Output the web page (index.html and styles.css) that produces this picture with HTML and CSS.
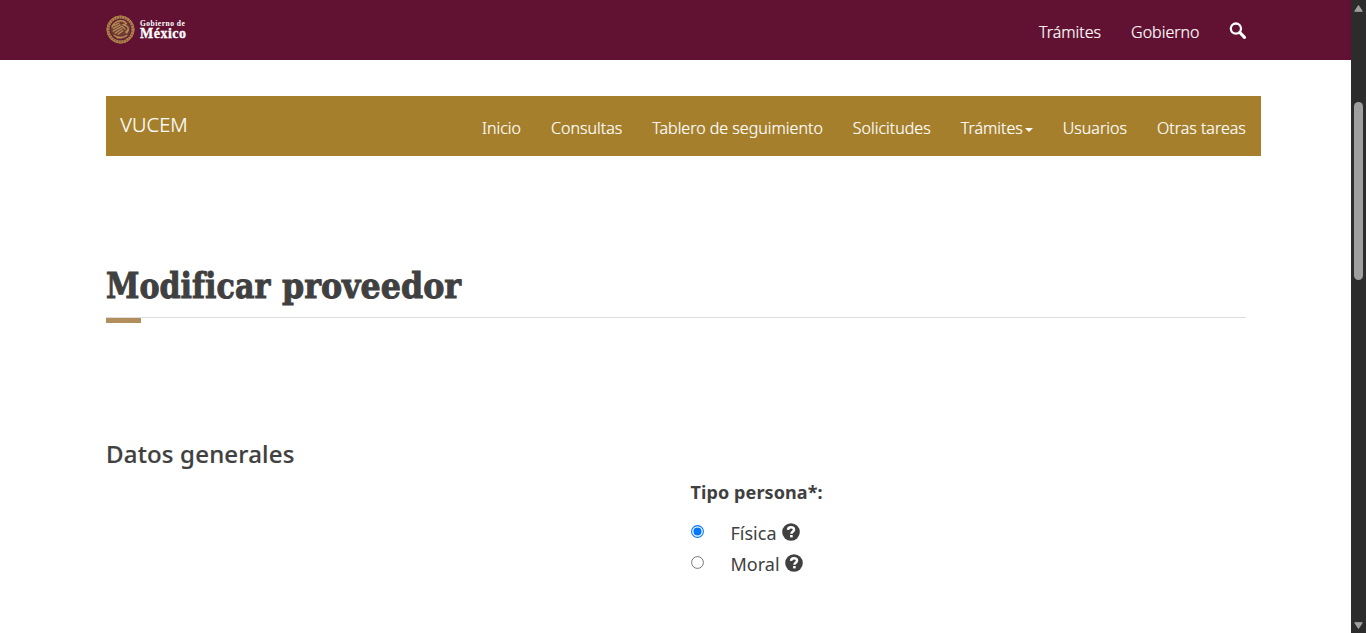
FILE: index.html
```html
<!DOCTYPE html>
<html lang="es">
<head>
<meta charset="utf-8">
<title>Modificar proveedor</title>
<link rel="stylesheet" href="styles.css">
</head>
<body>
<div class="window">
  <div class="page">
    <header class="gob-bar">
      <a class="gob-logo">
        <svg class="seal" viewBox="0 0 30 30" fill="none" stroke="#a9804a">
          <circle cx="15" cy="15" r="10.4" fill="#6f3a34" stroke="none"/>
          <circle cx="15" cy="15" r="12.8" stroke-width="3.2" stroke-dasharray="2.4 .4"/>
          <circle cx="15" cy="15" r="14" stroke-width="1"/>
          <path d="M6 13c1-4 5-7 9-7 3 0 5 1 6 3l-3 1 4 2c2 2 1 5-1 7M8 11l6-3M7 14l8-4M7 17l9-5M9 19l8-5M12 20l6-4M16 11l4 4M8 21c4 3 10 3 14 0M11 23c3 1 6 1 9-1M20 18c1-1 3-2 3-4" stroke="#b68d55" stroke-width="1.4"/>
        </svg>
        <span class="gob-words"><span class="gob-small">Gobierno de</span><span class="gob-big">México</span></span>
      </a>
      <nav class="gob-nav">
        <a>Trámites</a>
        <a>Gobierno</a>
        <svg class="search" viewBox="0 0 18 18" fill="none" stroke="#fff"><circle cx="6.9" cy="6.6" r="5.1" stroke-width="2.3"/><path d="M10.8 10.5l4.7 4.8" stroke-width="3.2" stroke-linecap="round"/></svg>
      </nav>
    </header>
    <div class="sub-bar">
      <a class="brand">VUCEM</a>
      <nav class="sub-nav">
        <a>Inicio</a><a>Consultas</a><a>Tablero de seguimiento</a><a>Solicitudes</a><a>Trámites<i class="caret"></i></a><a>Usuarios</a><a>Otras tareas</a>
      </nav>
    </div>
    <main class="content">
      <h1 class="title"><span class="word-first">Modificar</span> <span class="word-second">proveedor</span></h1>
      <div class="rule"></div>
      <h3 class="section">Datos generales</h3>
      <div class="field">
        <div class="field-label">Tipo persona*:</div>
        <label class="option"><svg class="radio" viewBox="0 0 13 13"><circle cx="6.5" cy="6.5" r="5.9" fill="#fff" stroke="#0075ff" stroke-width="1.1"/><circle cx="6.5" cy="6.5" r="4" fill="#0075ff"/></svg><span class="option-text">Física</span><svg class="help" viewBox="0 0 18 18"><circle cx="9" cy="9" r="8.8" fill="#404041"/><path d="M6 6.9C6.1 5 7.3 4.2 9 4.2s3 .9 3 2.5c0 2-2.6 2.1-2.6 4" fill="none" stroke="#fff" stroke-width="2.5"/><path d="M8.1 12h2.6v2.4H8.1z" fill="#fff"/></svg></label>
        <label class="option"><svg class="radio" viewBox="0 0 13 13"><circle cx="6.5" cy="6.5" r="5.9" fill="#fff" stroke="#767676" stroke-width="1"/></svg><span class="option-text">Moral</span><svg class="help" viewBox="0 0 18 18"><circle cx="9" cy="9" r="8.8" fill="#404041"/><path d="M6 6.9C6.1 5 7.3 4.2 9 4.2s3 .9 3 2.5c0 2-2.6 2.1-2.6 4" fill="none" stroke="#fff" stroke-width="2.5"/><path d="M8.1 12h2.6v2.4H8.1z" fill="#fff"/></svg></label>
      </div>
    </main>
  </div>
  <div class="scrollbar">
    <svg class="arrow" viewBox="0 0 9 7"><path d="M4.5.5L8.3 6.3H.7z" fill="#9f9f9f" stroke="#9f9f9f" stroke-linejoin="round"/></svg>
    <div class="thumb"></div>
    <svg class="arrow down" viewBox="0 0 9 7"><path d="M4.5 6.5L.7.7h7.6z" fill="#9f9f9f" stroke="#9f9f9f" stroke-linejoin="round"/></svg>
  </div>
</div>
</body>
</html>
```
FILE: styles.css
```css
* { box-sizing: border-box; }
body { margin: 0; background: #fff; color: #404041; font-family: "Noto Sans", sans-serif; overflow: hidden; }
.window { display: flex; height: 633px; }
.page { flex: 1; min-width: 0; }
.gob-bar { height: 60px; background: #611232; padding: 0 104.5px 0 106px; display: flex; justify-content: space-between; }
.gob-logo { display: flex; color: #fff; padding-top: 15px; }
.seal { width: 29px; height: 29px; }
.gob-words { display: flex; flex-direction: column; font-family: "Liberation Serif", serif; font-weight: 700; margin-left: 5px; padding-top: 5px; white-space: nowrap; }
.gob-small { font-size: 7.5px; line-height: 8px; letter-spacing: .5px; }
.gob-big { font-size: 14px; line-height: 11px; letter-spacing: .5px; -webkit-text-stroke: .3px #fff; }
.gob-nav { display: flex; color: #fff; font-size: 16px; font-weight: 300; line-height: 24px; padding-top: 20px; gap: 30px; -webkit-text-stroke: .2px #fff; }
.search { width: 18px; height: 18px; margin: 2px 0 0 -1px; }
.sub-bar { width: 1155px; height: 60px; margin: 36px 0 0 106px; background: #a57f2c; color: #fff; font-weight: 300; display: flex; justify-content: space-between; padding: 0 15.2px 0 14.3px; -webkit-text-stroke: .2px #fff; }
.brand { font-size: 20px; line-height: 28px; padding-top: 15px; letter-spacing: .1px; }
.sub-nav { display: flex; gap: 30px; font-size: 16px; line-height: 24px; padding-top: 20px; white-space: nowrap; }
.caret { display: inline-block; border: 4px solid transparent; border-top-color: #fff; border-bottom: 0; margin-left: 2px; vertical-align: middle; }
.content { padding: 106px 105px 0 106px; }
.title { margin: 0; height: 55px; line-height: 46px; font-family: "DejaVu Serif", serif; font-size: 36px; font-weight: 700; white-space: nowrap; display: flex; -webkit-text-stroke: 1px #404041; }
.word-first { width: 176px; transform: scaleX(.838); transform-origin: left; }
.word-second { transform: scaleX(.882); transform-origin: left; }
.rule { height: 6px; border-top: 1px solid #dddedd; }
.rule::after { content: ""; display: block; width: 35px; height: 5px; background: #b38e5d; }
.section { margin: 114px 0 0; font-size: 24px; line-height: 34px; font-weight: 500; letter-spacing: .18px; -webkit-text-stroke: .2px #404041; }
.field { margin: 8px 0 0 584.5px; }
.field-label { font-size: 18px; line-height: 26px; font-weight: 700; margin-bottom: 13px; letter-spacing: .1px; }
.option { display: flex; height: 31px; font-size: 18px; line-height: 31px; }
.radio { width: 13px; height: 13px; margin: 7px 26.5px 0 .5px; }
.help { width: 18px; height: 18px; margin: 5px 0 0 5px; }
.scrollbar { width: 15px; background: #2c2c2c; display: flex; flex-direction: column; align-items: center; padding-top: 5px; }
.arrow { width: 9px; height: 7px; }
.thumb { width: 9px; height: 178px; border-radius: 5px; background: #9f9f9f; margin-top: 90px; }
.down { margin: auto 0 4px; }
```
